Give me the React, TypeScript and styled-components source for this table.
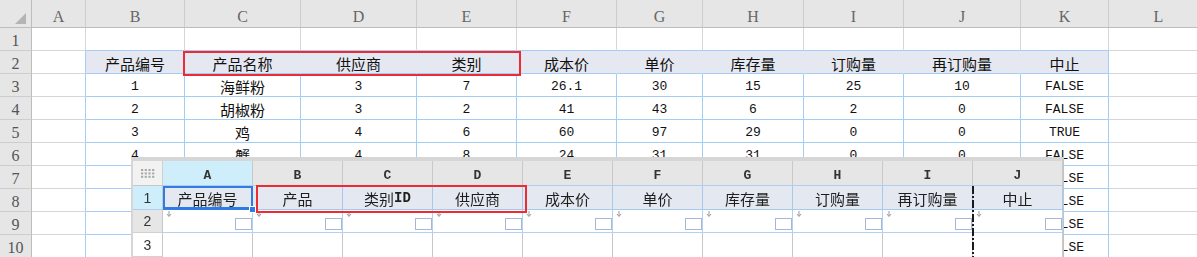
import React from 'react';
import styled, { createGlobalStyle } from 'styled-components';

const GlobalStyle = createGlobalStyle`
  *, *::before, *::after { box-sizing: border-box; }
  html, body { margin: 0; padding: 0; background: #fff; }
  body { overflow: hidden; }
`;

const BLUE = '#a3cdf4';
const GRID = '#d6d6d6';
const HEAD_BG = '#e6e6e6';
const TABLE_HEAD = '#e5e8f0';
const RED = '#ee2a33';

const letters = ['A', 'B', 'C', 'D', 'E', 'F', 'G', 'H', 'I', 'J', 'K', 'L'];

const header = ['产品编号', '产品名称', '供应商', '类别', '成本价', '单价', '库存量', '订购量', '再订购量', '中止'];

// rows 7-10 sit under the floating window, only the last column peeks out
const products = [
  ['1', '海鲜粉', '3', '7', '26.1', '30', '15', '25', '10', 'FALSE'],
  ['2', '胡椒粉', '3', '2', '41', '43', '6', '2', '0', 'FALSE'],
  ['3', '鸡', '4', '6', '60', '97', '29', '0', '0', 'TRUE'],
  ['4', '蟹', '4', '8', '24', '31', '31', '0', '0', 'FALSE'],
  ['', '', '', '', '', '', '', '', '', 'FALSE'],
  ['', '', '', '', '', '', '', '', '', 'FALSE'],
  ['', '', '', '', '', '', '', '', '', 'FALSE'],
  ['', '', '', '', '', '', '', '', '', 'FALSE'],
];

const fieldCols = ['产品编号', '产品', '类别ID', '供应商', '成本价', '单价', '库存量', '订购量', '再订购量', '中止'];

const isAscii = (s: string) => /^[\x20-\x7e]+$/.test(s);

const Page = styled.div`
  position: relative;
  width: 1197px;
  height: 257px;
  overflow: hidden;
  background: #fff;
`;

/* main worksheet */
const Sheet = styled.div`
  display: grid;
  grid-template-columns: 32px 54px 99px 116px 116px 100px 100px 86px 101px 100px 117px 88px 100px;
  grid-template-rows: 28px repeat(10, 23px);
`;

const Corner = styled.div`
  position: relative;
  background: ${HEAD_BG};
  border-right: 1px solid #bdbdbd;
  border-bottom: 1px solid #bdbdbd;

  &::after {
    content: '';
    position: absolute;
    right: 5px;
    bottom: 3px;
    border-left: 11px solid transparent;
    border-bottom: 11px solid #b4b4b4;
  }
`;

const ColHead = styled.div`
  display: flex;
  align-items: center;
  justify-content: center;
  padding-top: 7px;
  background: ${HEAD_BG};
  border-right: 1px solid #cdcdcd;
  border-bottom: 1px solid #bdbdbd;
  font: 16px 'Liberation Serif', serif;
  color: #666;
`;

const RowHead = styled.div`
  display: flex;
  align-items: center;
  justify-content: center;
  padding-top: 3px;
  background: ${HEAD_BG};
  border-right: 1px solid #bdbdbd;
  border-bottom: 1px solid #cdcdcd;
  font: 16px 'Liberation Serif', serif;
  color: #555;
`;

const Cell = styled.div<{ $fill?: string; $right: string; $bottom: string }>`
  display: flex;
  align-items: center;
  justify-content: center;
  padding-top: 2px;
  background: ${({ $fill }) => $fill ?? '#fff'};
  border-right: 1px solid ${({ $right }) => $right};
  border-bottom: 1px solid ${({ $bottom }) => $bottom};
  color: #111;
  line-height: 1;
  white-space: nowrap;
  overflow: hidden;
`;

const Value = styled.span<{ $mono?: boolean }>`
  font-family: ${({ $mono }) =>
    $mono ? "'Liberation Mono', monospace" : "'Noto Sans CJK SC', sans-serif"};
  font-size: ${({ $mono }) => ($mono ? '13px' : '15px')};
`;

const Mark = styled.div<{ $left: number; $top: number; $w: number; $h: number }>`
  position: absolute;
  left: ${({ $left }) => $left}px;
  top: ${({ $top }) => $top}px;
  width: ${({ $w }) => $w}px;
  height: ${({ $h }) => $h}px;
  border: 2px solid ${RED};
  pointer-events: none;
  z-index: 5;
`;

/* floating data-source window */
const Float = styled.div`
  position: absolute;
  left: 131px;
  top: 157px;
  width: 933px;
  border-top: 4px solid #d6d6d6;
  border-left: 2px solid #d6d6d6;
  border-right: 1px solid #c4c4c4;
  background: #fff;
  filter: blur(0.3px);
  z-index: 2;
`;

const FloatGrid = styled.div`
  display: grid;
  grid-template-columns: 30px repeat(10, 90px);
  grid-template-rows: 25px 24px 23px 24px;
`;

const FloatCorner = styled.div`
  display: flex;
  align-items: center;
  justify-content: center;
  background: #f2f2f2;
  border-right: 1px solid #cfcfcf;
  border-bottom: 1px solid #c6c6c6;
`;

const FloatHead = styled.div<{ $active?: boolean }>`
  display: flex;
  align-items: center;
  justify-content: center;
  padding-top: 4px;
  background: ${({ $active }) => ($active ? '#cdeefa' : '#e6e6e6')};
  border-right: 1px solid #c8c8c8;
  border-bottom: 1px solid #b2cdec;
  font: bold 13px 'Liberation Mono', monospace;
  color: #333;
`;

const FloatRowHead = styled.div<{ $tone: 'active' | 'gray' | 'plain' }>`
  display: flex;
  align-items: center;
  justify-content: center;
  background: ${({ $tone }) =>
    $tone === 'active' ? '#cdeefa' : $tone === 'gray' ? '#e6e6e6' : '#fff'};
  border-right: 1px solid #c8c8c8;
  border-bottom: 1px solid ${({ $tone }) => ($tone === 'active' ? '#b2cdec' : '#d2d2d2')};
  font: 14px 'Liberation Sans', sans-serif;
  color: #333;
`;

const FieldCell = styled.div<{ $selected?: boolean }>`
  position: relative;
  display: flex;
  align-items: center;
  justify-content: center;
  padding-top: 1px;
  background: #e4e8f1;
  border-right: 1px solid #a8c9ee;
  border-bottom: 1px solid #a8c9ee;
  color: #1e1e1e;
  line-height: 1;
  white-space: nowrap;

  ${({ $selected }) =>
    $selected &&
    `
    &::after {
      content: '';
      position: absolute;
      left: 0;
      top: 0;
      right: -1px;
      bottom: -1px;
      border: 2px solid #2f7be6;
      border-bottom-width: 3px;
    }
    &::before {
      content: '';
      position: absolute;
      right: -4px;
      bottom: -4px;
      width: 7px;
      height: 7px;
      background: #2f7be6;
      border: 1px solid #fff;
      z-index: 1;
    }
  `}
`;

const FieldText = styled.span<{ $mono?: boolean }>`
  font-family: ${({ $mono }) =>
    $mono ? "'Liberation Mono', monospace" : "'Noto Sans CJK SC', sans-serif"};
  font-size: ${({ $mono }) => ($mono ? '14px' : '15px')};
  font-weight: ${({ $mono }) => ($mono ? 'bold' : 'normal')};
`;

const InputCell = styled.div`
  position: relative;
  display: flex;
  align-items: flex-end;
  justify-content: flex-end;
  padding-bottom: 2px;
  background: #fff;
  border-right: 1px solid #b3d2f0;
  border-bottom: 1px solid #b3d2f0;
`;

const InputBox = styled.div`
  width: 17px;
  height: 12px;
  border: 1px solid #a6b8d4;
  background: #fff;
`;

const DropMark = styled.svg`
  position: absolute;
  left: 3px;
  top: 1px;
`;

const BlankCell = styled.div`
  background: #fff;
  border-right: 1px solid #c8c8c8;
`;

const PageBreak = styled.svg`
  position: absolute;
  left: 972px;
  top: 186px;
  z-index: 3;
`;

const Dots: React.FC = () => (
  <svg width="14" height="9" viewBox="0 0 14 9">
    {[0, 1, 2].map((r) =>
      [0, 1, 2, 3].map((c) => (
        <rect key={`${r}-${c}`} x={c * 3.7} y={r * 3.4} width="2.2" height="2" fill="#a9a9a9" />
      ))
    )}
  </svg>
);

const sheetCell = (row: number, col: number) => {
  // col: 0 = A ... 11 = L
  const inTable = col >= 1 && col <= 10;
  if (row === 1) {
    return { right: GRID, bottom: inTable ? BLUE : GRID, text: '' };
  }
  if (row === 2) {
    if (inTable)
      return { fill: TABLE_HEAD, right: col === 10 ? BLUE : TABLE_HEAD, bottom: BLUE, text: header[col - 1] };
    return { right: col === 0 ? BLUE : GRID, bottom: GRID, text: '' };
  }
  const data = products[row - 3];
  if (inTable) return { right: BLUE, bottom: BLUE, text: data[col - 1] };
  return { right: col === 0 ? BLUE : GRID, bottom: GRID, text: '' };
};

const App: React.FC = () => {
  return (
    <Page>
      <GlobalStyle />
      <Sheet>
        <Corner />
        {letters.map((l) => (
          <ColHead key={l}>{l}</ColHead>
        ))}
        {Array.from({ length: 10 }, (_, i) => i + 1).map((row) => (
          <React.Fragment key={row}>
            <RowHead>{row}</RowHead>
            {letters.map((l, col) => {
              const c = sheetCell(row, col);
              return (
                <Cell key={l} $fill={c.fill} $right={c.right} $bottom={c.bottom}>
                  {c.text && <Value $mono={isAscii(c.text)}>{c.text}</Value>}
                </Cell>
              );
            })}
          </React.Fragment>
        ))}
      </Sheet>
      <Mark $left={183} $top={51} $w={338} $h={25} />

      <Float>
        <FloatGrid>
          <FloatCorner>
            <Dots />
          </FloatCorner>
          {letters.slice(0, 10).map((l, i) => (
            <FloatHead key={l} $active={i === 0}>
              {l}
            </FloatHead>
          ))}

          <FloatRowHead $tone="active">1</FloatRowHead>
          {fieldCols.map((f, i) => (
            <FieldCell key={f} $selected={i === 0}>
              {f === '类别ID' ? (
                <>
                  <FieldText>类别</FieldText>
                  <FieldText $mono>ID</FieldText>
                </>
              ) : (
                <FieldText>{f}</FieldText>
              )}
            </FieldCell>
          ))}

          <FloatRowHead $tone="gray">2</FloatRowHead>
          {fieldCols.map((f) => (
            <InputCell key={f}>
              <DropMark width="6" height="6" viewBox="0 0 6 6">
                <path d="M3 0v5M1 3l2 2.5L5 3" stroke="#9a9a9a" strokeWidth="1" fill="none" />
              </DropMark>
              <InputBox />
            </InputCell>
          ))}

          <FloatRowHead $tone="plain">3</FloatRowHead>
          {fieldCols.map((f) => (
            <BlankCell key={f} />
          ))}
        </FloatGrid>
      </Float>
      <Mark $left={256} $top={185} $w={271} $h={28} />
      <PageBreak width="2" height="71" viewBox="0 0 2 71">
        <line x1="1" y1="0" x2="1" y2="71" stroke="#1a1a1a" strokeWidth="2" strokeDasharray="8 2 2 2" />
      </PageBreak>
    </Page>
  );
};

export default App;
